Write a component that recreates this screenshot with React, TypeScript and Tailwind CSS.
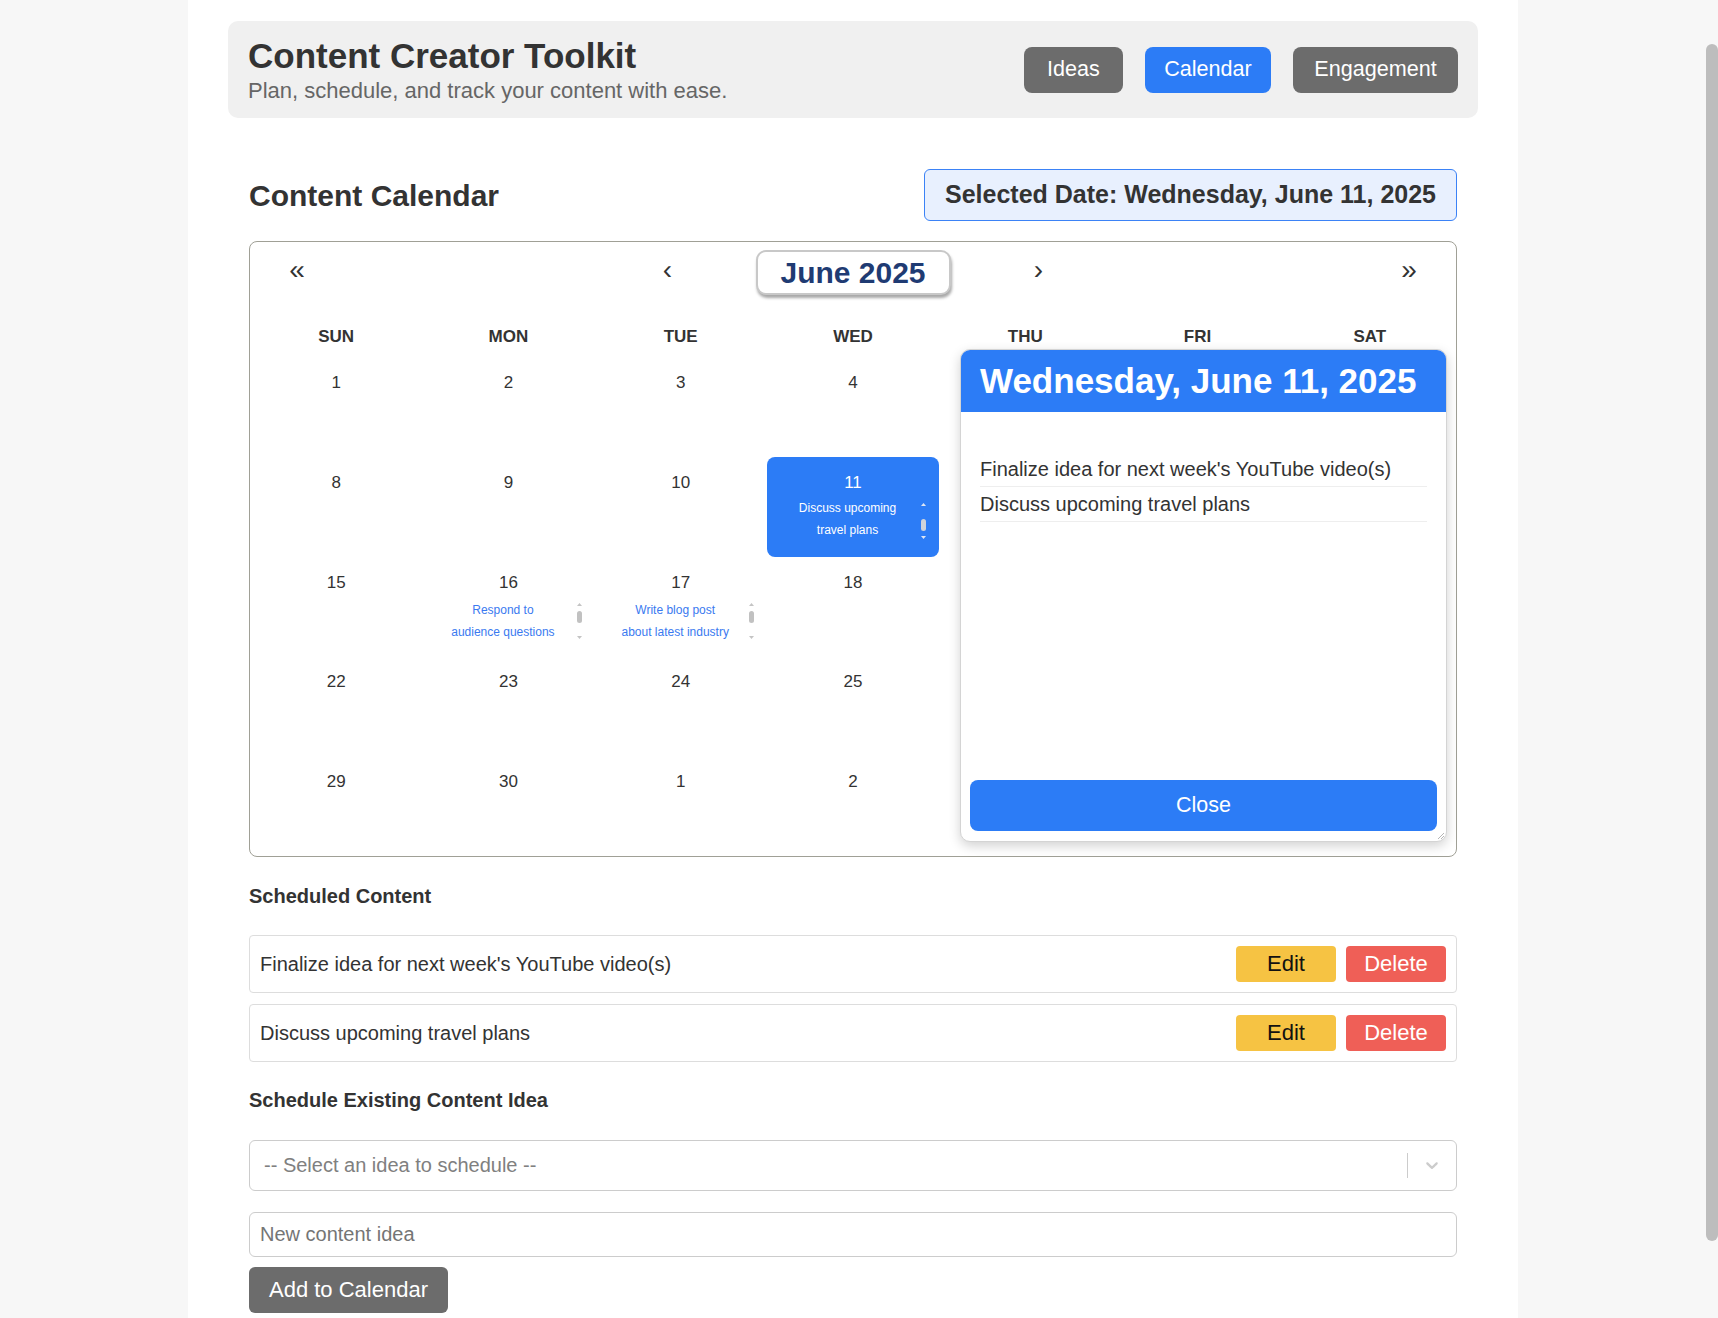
import React from "react";

const BLUE = "bg-[#2c7cf6]";

function FakeScroll({ thumbY, light }: { thumbY: number; light?: boolean }) {
  const arrow = light ? "#dfe6f3" : "#c4c4c4";
  const thumb = light ? "#cfd3da" : "#c1c1c1";
  return (
    <svg width="11" height="44" viewBox="0 0 11 44" className="shrink-0">
      <polygon points="3,7 8,7 5.5,4" fill={arrow} />
      <rect x="3" y={thumbY} width="5" height="12" rx="2.5" fill={thumb} />
      <polygon points="3,37 8,37 5.5,40" fill={arrow} />
    </svg>
  );
}

type Day = { n?: number; event?: string; selected?: boolean };

// Thursday–Saturday tiles sit under the open day panel and show nothing.
const rows: Day[][] = [
  [{ n: 1 }, { n: 2 }, { n: 3 }, { n: 4 }, {}, {}, {}],
  [{ n: 8 }, { n: 9 }, { n: 10 }, { n: 11, event: "Discuss upcoming travel plans", selected: true }, {}, {}, {}],
  [
    { n: 15 },
    { n: 16, event: "Respond to audience questions" },
    { n: 17, event: "Write blog post about latest industry" },
    { n: 18 },
    {},
    {},
    {},
  ],
  [{ n: 22 }, { n: 23 }, { n: 24 }, { n: 25 }, {}, {}, {}],
  [{ n: 29 }, { n: 30 }, { n: 1 }, { n: 2 }, {}, {}, {}],
];

function Tile({ d }: { d: Day }) {
  return (
    <div
      className={
        "h-[99.8px] flex flex-col items-center px-[10px] pt-[16px] " +
        (d.selected ? "bg-[#2c7cf6] rounded-[8px] text-white" : "text-[#333]")
      }
    >
      <div className="text-[17px] leading-[20px]">{d.n}</div>
      {d.event && (
        <div className="mt-[6px] h-[44px] w-full flex overflow-hidden">
          <div className="flex-1 overflow-hidden">
            <div
              className={
                "w-[110px] mx-auto text-center text-[12px] leading-[22px] " +
                (d.selected ? "text-white -mt-[2px]" : "text-[#3a7af0]")
              }
            >
              {d.event}
            </div>
          </div>
          <FakeScroll thumbY={d.selected ? 20 : 12} light={d.selected} />
        </div>
      )}
    </div>
  );
}

export default function App() {
  return (
    <div className="h-[1318px] overflow-hidden flex bg-[#f7f7f7] text-[#333] font-['Liberation_Sans',Arial,sans-serif]">
      <div className="w-[1706px] shrink-0">
        <div className="mx-auto w-[1330px] min-h-[1318px] bg-white pt-[21px] px-[40px]">
          {/* Header */}
          <header className="rounded-[10px] bg-[#f0f0f0] px-[20px] py-[15px] flex items-center justify-between">
            <div>
              <h1 className="text-[35px] font-bold leading-[40px] text-[#333]">Content Creator Toolkit</h1>
              <p className="mt-[2px] text-[22px] leading-[25px] text-[#666]">
                Plan, schedule, and track your content with ease.
              </p>
            </div>
            <nav className="flex gap-[22px]">
              <button className="h-[46px] w-[99px] rounded-[8px] bg-[#6c6c6c] text-white text-[21.6px]">Ideas</button>
              <button className={"h-[46px] w-[126px] rounded-[8px] text-white text-[21.6px] " + BLUE}>Calendar</button>
              <button className="h-[46px] w-[165px] rounded-[8px] bg-[#6c6c6c] text-white text-[21.6px]">
                Engagement
              </button>
            </nav>
          </header>

          <section className="px-[21px]">
            <div className="mt-[51px] flex items-center justify-between">
              <h2 className="text-[30px] font-bold text-[#333]">Content Calendar</h2>
              <div className="h-[52px] px-[20px] flex items-center border border-[#3b82f6] bg-[#e8f0fe] rounded-[6px] text-[25px] font-bold text-[#333]">
                Selected Date: Wednesday, June 11, 2025
              </div>
            </div>

            {/* Calendar */}
            <div className="mt-[20px] relative border border-[#a0a096] rounded-[8px] bg-white">
              <div className="mt-[8px] h-[45px] flex items-center justify-between">
                <button className="w-[94px] pb-[6px] text-[28px] leading-none text-[#333]">«</button>
                <div className="flex items-center gap-[41px]">
                  <button className="w-[94px] pb-[6px] text-[28px] leading-none text-[#333]">‹</button>
                  <div className="h-[45px] w-[195px] border-2 border-[#c8c8c8] rounded-[10px] bg-white shadow-[1px_3px_3px_rgba(0,0,0,0.35)] flex items-center justify-center text-[30px] font-bold text-[#1f3b73]">
                    June 2025
                  </div>
                  <button className="w-[94px] pb-[6px] text-[28px] leading-none text-[#333]">›</button>
                </div>
                <button className="w-[94px] pb-[6px] text-[28px] leading-none text-[#333]">»</button>
              </div>
              <div className="grid grid-cols-7 h-[62px] pt-[32px]">
                {["SUN", "MON", "TUE", "WED", "THU", "FRI", "SAT"].map((w) => (
                  <div key={w} className="text-center text-[17px] font-bold leading-[20px] text-[#333]">
                    {w}
                  </div>
                ))}
              </div>
              <div className="grid grid-cols-7">
                {rows.flat().map((d, i) => (
                  <Tile key={i} d={d} />
                ))}
              </div>

              {/* Day detail panel */}
              <div className="absolute left-[710px] top-[107px] w-[487px] h-[493px] flex flex-col bg-white border border-[#d4d4d4] rounded-[10px] overflow-hidden shadow-[0_4px_12px_rgba(0,0,0,0.18)]">
                <div className={"h-[62px] shrink-0 flex items-center px-[19px] text-[35px] font-bold text-white " + BLUE}>
                  Wednesday, June 11, 2025
                </div>
                <div className="flex-1 pt-[40px] px-[19px]">
                  <div className="py-[5px] leading-[24px] text-[20px] border-b border-[#eeeeee]">
                    Finalize idea for next week's YouTube video(s)
                  </div>
                  <div className="py-[5px] leading-[24px] text-[20px] border-b border-[#eeeeee]">
                    Discuss upcoming travel plans
                  </div>
                </div>
                <button className={"mx-[9px] mb-[10px] h-[51px] shrink-0 rounded-[8px] text-white text-[21.5px] " + BLUE}>
                  Close
                </button>
                <svg width="9" height="9" viewBox="0 0 9 9" className="absolute right-[1px] bottom-[1px]">
                  <line x1="8" y1="2" x2="2" y2="8" stroke="#b5b5b5" strokeWidth="1" />
                  <line x1="8" y1="5" x2="5" y2="8" stroke="#b5b5b5" strokeWidth="1" />
                </svg>
              </div>
            </div>

            <h3 className="mt-[28px] mb-[27px] text-[20px] font-bold leading-[23px] text-[#333]">Scheduled Content</h3>
            <div className="flex flex-col gap-[11px]">
              {["Finalize idea for next week's YouTube video(s)", "Discuss upcoming travel plans"].map((t) => (
                <div key={t} className="border border-[#dddddd] rounded-[4px] p-[10px] flex items-center justify-between">
                  <span className="text-[20px] text-[#333]">{t}</span>
                  <div className="flex gap-[10px]">
                    <button className="w-[100px] h-[36px] rounded-[4px] bg-[#f6c343] text-[22px] text-[#111]">Edit</button>
                    <button className="w-[100px] h-[36px] rounded-[4px] bg-[#ef5f57] text-[22px] text-white">Delete</button>
                  </div>
                </div>
              ))}
            </div>

            <h3 className="mt-[27px] mb-[28px] text-[20px] font-bold leading-[23px] text-[#333]">
              Schedule Existing Content Idea
            </h3>
            <div className="h-[51px] border border-[#cccccc] rounded-[6px] flex items-center pl-[14px] bg-white">
              <span className="flex-1 text-[20px] text-[#808080]">-- Select an idea to schedule --</span>
              <span className="w-px h-[25px] bg-[#cccccc]" />
              <span className="w-[48px] flex justify-center">
                <svg width="20" height="20" viewBox="0 0 20 20" fill="#cccccc">
                  <path d="M4.516 7.548c0.436-0.446 1.043-0.481 1.576 0l3.908 3.747 3.908-3.747c0.533-0.481 1.141-0.446 1.574 0 0.436 0.445 0.408 1.197 0 1.615-0.406 0.418-4.695 4.502-4.695 4.502-0.217 0.223-0.502 0.335-0.787 0.335s-0.57-0.112-0.789-0.335c0 0-4.287-4.084-4.695-4.502s-0.436-1.17 0-1.615z" />
                </svg>
              </span>
            </div>
            <input
              className="mt-[21px] block w-full h-[45px] border border-[#cccccc] rounded-[6px] px-[10px] text-[20px] text-[#333] placeholder:text-[#757575] outline-none"
              placeholder="New content idea"
            />
            <button className="mt-[10px] h-[46px] px-[20px] rounded-[6px] bg-[#6c6c6c] text-white text-[22px]">
              Add to Calendar
            </button>
          </section>
        </div>
      </div>
      <div className="w-[12px] shrink-0 pt-[44px]">
        <div className="h-[1197px] rounded-full bg-[#bdbdbd]" />
      </div>
    </div>
  );
}
